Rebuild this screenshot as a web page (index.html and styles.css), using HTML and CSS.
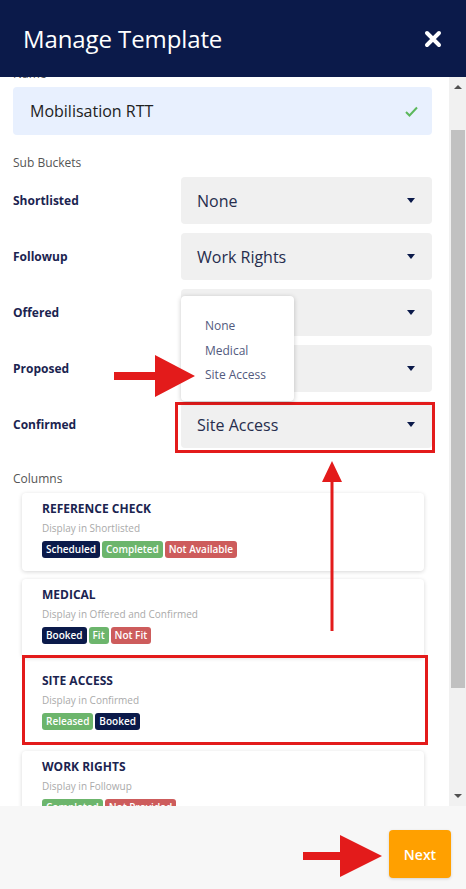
FILE: index.html
```html
<!DOCTYPE html>
<html lang="en">
<head>
  <meta charset="UTF-8">
  <meta name="viewport" content="width=device-width, initial-scale=1.0">
  <title>Manage Template</title>
  <link rel="stylesheet" href="styles.css">
</head>
<body>
<div class="modal">
  <header class="modal-head">
    <h1 class="modal-title">Manage Template</h1>
    <button class="close-btn" type="button">
      <svg width="18" height="18" viewBox="0 0 18 18"><path d="M3 3 L15 15 M15 3 L3 15" stroke="#fff" stroke-width="4" stroke-linecap="round"/></svg>
    </button>
  </header>

  <div class="modal-body">
    <div class="scroll-content">
      <div class="field-label">Name</div>
      <div class="name-input">
        <span>Mobilisation RTT</span>
        <svg width="13" height="11" viewBox="0 0 13 11"><path d="M1 6 L4.5 9.5 L12 1.5" fill="none" stroke="#5cb85c" stroke-width="2"/></svg>
      </div>

      <div class="section-title">Sub Buckets</div>
      <div class="bucket-row">
        <span class="bucket-label">Shortlisted</span>
        <div class="select">None<i class="caret"></i></div>
      </div>
      <div class="bucket-row">
        <span class="bucket-label">Followup</span>
        <div class="select">Work Rights<i class="caret"></i></div>
      </div>
      <div class="bucket-row">
        <span class="bucket-label">Offered</span>
        <div class="select select-open">
          <i class="caret"></i>
          <ul class="dropdown">
            <li>None</li>
            <li>Medical</li>
            <li>Site Access</li>
          </ul>
        </div>
      </div>
      <div class="bucket-row">
        <span class="bucket-label">Proposed</span>
        <div class="select"><i class="caret"></i></div>
      </div>
      <div class="bucket-row">
        <span class="bucket-label">Confirmed</span>
        <div class="select select-marked">Site Access<i class="caret"></i><span class="mark-box mark-select"></span></div>
      </div>

      <div class="section-title columns-title">Columns</div>
      <div class="cards">
        <div class="card">
          <div class="card-title">REFERENCE CHECK</div>
          <div class="card-sub">Display in Shortlisted</div>
          <div class="badges"><span class="badge navy">Scheduled</span><span class="badge green">Completed</span><span class="badge red">Not Available</span></div>
        </div>
        <div class="card">
          <div class="card-title">MEDICAL</div>
          <div class="card-sub">Display in Offered and Confirmed</div>
          <div class="badges"><span class="badge navy">Booked</span><span class="badge green">Fit</span><span class="badge red">Not Fit</span></div>
        </div>
        <div class="card card-marked">
          <div class="card-title">SITE ACCESS</div>
          <div class="card-sub">Display in Confirmed</div>
          <div class="badges"><span class="badge green">Released</span><span class="badge navy">Booked</span></div>
          <span class="mark-box mark-card"></span>
        </div>
        <div class="card">
          <div class="card-title">WORK RIGHTS</div>
          <div class="card-sub">Display in Followup</div>
          <div class="badges"><span class="badge green">Completed</span><span class="badge red">Not Provided</span></div>
        </div>
      </div>
    </div>

    <div class="scrollbar">
      <span class="sb-arrow sb-up"></span>
      <div class="sb-track"><div class="sb-thumb"></div></div>
      <span class="sb-arrow sb-down"></span>
    </div>
  </div>

  <footer class="modal-foot">
    <button class="next-btn" type="button">Next</button>
  </footer>

  <!-- red annotation arrows -->
  <svg class="arrow arrow-left" width="82" height="44" viewBox="0 0 82 44"><path d="M0 18 H41 V1 L81 22 L41 43 V26 H0 Z" fill="#e31b1b"/></svg>
  <svg class="arrow arrow-up" width="22" height="172" viewBox="0 0 22 172"><path d="M11 0 L21 21 H12.5 V170 H9.5 V21 H1 Z" fill="#e31b1b"/></svg>
  <svg class="arrow arrow-next" width="80" height="44" viewBox="0 0 80 44"><path d="M0 17 H37 V0 L79 21 L37 42 V25 H0 Z" fill="#e31b1b"/></svg>
</div>
</body>
</html>
```

FILE: styles.css
```css
body {
  margin: 0;
  font-family: "Open Sans", "Liberation Sans", sans-serif;
  background: #fff;
}
.modal {
  position: relative;
  width: 466px;
  height: 889px;
  display: flex;
  flex-direction: column;
  overflow: hidden;
}

/* header */
.modal-head {
  height: 77px;
  flex: none;
  background: #0b1a4a;
  display: flex;
  align-items: center;
  justify-content: space-between;
  padding: 0 24px 0 23px;
  box-sizing: border-box;
}
.modal-title {
  margin: 0;
  color: #fff;
  font-size: 24px;
  font-weight: 500;
  letter-spacing: -0.1px;
}
.close-btn {
  border: 0;
  background: none;
  padding: 0;
  width: 18px;
  height: 18px;
  display: flex;
}

/* body */
.modal-body {
  height: 729px;
  flex: none;
  display: flex;
  overflow: hidden;
}
.scroll-content {
  flex: 1;
  padding: 0 17px 0 13px;
}
.field-label {
  margin-top: -11px;
  line-height: 16px;
  font-size: 12px;
  color: #555;
  margin-bottom: 5px;
}
.name-input {
  height: 48px;
  background: #e8f0fe;
  border-radius: 4px;
  display: flex;
  align-items: center;
  justify-content: space-between;
  padding: 0 14px 0 17px;
  font-size: 16px;
  color: #222;
}
.section-title {
  font-size: 12px;
  line-height: 16px;
  color: #555;
  margin: 20px 0 6px;
}
.columns-title {
  margin: 23px 0 6px;
}
.bucket-row {
  display: flex;
  align-items: center;
  margin-bottom: 9px;
}
.bucket-label {
  width: 168px;
  font-size: 12px;
  font-weight: 700;
  color: #1b2450;
}
.select {
  position: relative;
  flex: 1;
  height: 47px;
  background: #f0f0f0;
  border-radius: 4px;
  display: flex;
  align-items: center;
  padding: 0 17px 0 16px;
  font-size: 16px;
  color: #262d4d;
}
.caret {
  margin-left: auto;
  width: 0;
  height: 0;
  border-left: 4.5px solid transparent;
  border-right: 4.5px solid transparent;
  border-top: 5px solid #0b1a4a;
}
.dropdown {
  position: absolute;
  left: 0;
  top: 7px;
  width: 113px;
  height: 105px;
  margin: 0;
  padding: 18px 0 0 24px;
  box-sizing: border-box;
  list-style: none;
  background: #fff;
  border-radius: 4px;
  box-shadow: 0 1px 5px rgba(0, 0, 0, 0.22);
  z-index: 2;
}
.dropdown li {
  font-size: 12px;
  line-height: 24.5px;
  color: #525a7e;
}
.mark-box {
  position: absolute;
  border: 3px solid #e31b1b;
  pointer-events: none;
}
.mark-select {
  top: 1px;
  left: -6px;
  right: -3px;
  bottom: -5px;
}

/* cards */
.cards {
  padding: 0 8px 0 9px;
}
.card {
  position: relative;
  background: #fff;
  border-radius: 4px;
  box-shadow: 0 1px 4px rgba(0, 0, 0, 0.16);
  padding: 8px 20px 13px;
  margin-bottom: 8px;
}
.card-marked {
  box-shadow: none;
}
.mark-card {
  top: -10px;
  left: 0;
  right: -4px;
  bottom: -2px;
}
.card-title {
  font-size: 12px;
  line-height: 16px;
  font-weight: 700;
  color: #1b2450;
}
.card-sub {
  margin-top: 3px;
  font-size: 10px;
  line-height: 16px;
  color: #aaa;
}
.badges {
  margin-top: 5px;
  display: flex;
  gap: 2px;
}
.badge {
  height: 17px;
  line-height: 17px;
  padding: 0 4px;
  border-radius: 3px;
  font-size: 10px;
  font-weight: 600;
  color: #fff;
}
.navy { background: #0b1a4a; }
.green { background: #6cb56c; }
.red { background: #cd5c5c; }

/* fake scrollbar */
.scrollbar {
  width: 17px;
  flex: none;
  background: #f1f1f1;
  display: flex;
  flex-direction: column;
  align-items: center;
}
.sb-arrow {
  width: 0;
  height: 0;
  border-left: 4px solid transparent;
  border-right: 4px solid transparent;
  margin: 8px 0 6px;
}
.sb-up { border-bottom: 4px solid #505050; }
.sb-down { border-top: 4px solid #505050; margin: 6px 0 8px; }
.sb-track {
  flex: 1;
  width: 100%;
  display: flex;
  justify-content: center;
}
.sb-thumb {
  width: 14px;
  margin-top: 35px;
  height: 558px;
  background: #c1c1c1;
}

/* footer */
.modal-foot {
  flex: 1;
  background: #f7f7f7;
  display: flex;
  justify-content: flex-end;
  align-items: flex-start;
  padding: 24px 15px 0 0;
}
.next-btn {
  width: 62px;
  height: 48px;
  border: 0;
  border-radius: 4px;
  background: #ffa000;
  color: #fff;
  font-family: inherit;
  font-size: 14px;
  font-weight: 600;
  box-shadow: 0 1px 3px rgba(0, 0, 0, 0.15);
}

/* annotations */
.arrow {
  position: absolute;
  z-index: 3;
}
.arrow-left { left: 114px; top: 354px; }
.arrow-up { left: 321px; top: 461px; }
.arrow-next { left: 303px; top: 835px; }
```
